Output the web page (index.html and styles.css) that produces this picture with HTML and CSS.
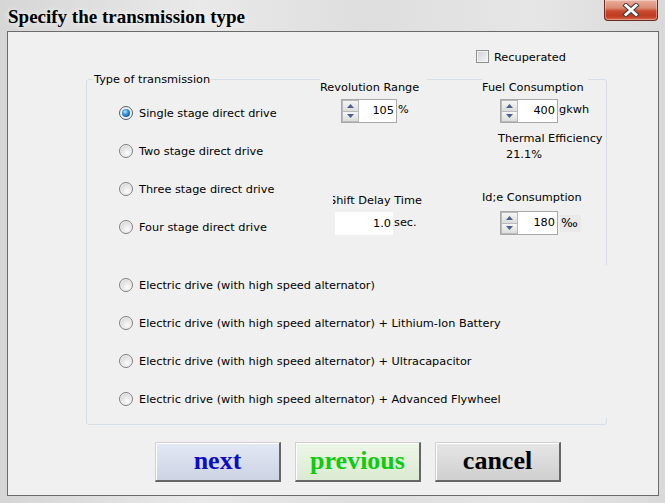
FILE: index.html
```html
<!DOCTYPE html>
<html>
<head>
<meta charset="utf-8">
<link rel="stylesheet" href="styles.css">
</head>
<body>
<div class="window">
  <div class="titlebar">
    <span class="title">Specify the transmission type</span>
    <div class="close">
      <svg width="20" height="14" viewBox="0 0 20 14">
        <path d="M5 2.5 L15 11.5 M15 2.5 L5 11.5" stroke="#3c3c3c" stroke-width="5" stroke-linecap="square"/>
        <path d="M5 2.5 L15 11.5 M15 2.5 L5 11.5" stroke="#ffffff" stroke-width="3" stroke-linecap="square"/>
      </svg>
    </div>
  </div>
  <div class="client">
    <div class="check-row"><span class="checkbox"></span><span class="txt">Recuperated</span></div>
    <div class="group">
      <div class="group-head">
        <span class="legend">Type of transmission</span>
        <span class="head-lbl rev-lbl">Revolution Range</span>
        <span class="head-lbl fuel-lbl">Fuel Consumption</span>
      </div>
      <div class="group-body">
        <div class="radios">
          <div class="radio-row"><span class="radio checked"><span class="dot"></span></span><span class="txt">Single stage direct drive</span></div>
          <div class="radio-row"><span class="radio"></span><span class="txt">Two stage direct drive</span></div>
          <div class="radio-row"><span class="radio"></span><span class="txt">Three stage direct drive</span></div>
          <div class="radio-row"><span class="radio"></span><span class="txt">Four stage direct drive</span></div>
        </div>
        <div class="col col1">
          <div class="ctl-row rev-row">
            <div class="spin">
              <div class="spin-btns">
                <span class="sb"><svg width="7" height="4" viewBox="0 0 7 4"><path d="M0 4 L3.5 0 L7 4 Z" fill="#4d5f8e"/></svg></span>
                <span class="sb"><svg width="7" height="4" viewBox="0 0 7 4"><path d="M0 0 L7 0 L3.5 4 Z" fill="#4d5f8e"/></svg></span>
              </div>
              <span class="spin-val">105</span>
            </div>
            <span class="unit">%</span>
          </div>
          <div class="shift-lbl"><span>Shift Delay Time</span></div>
          <div class="ctl-row shift-row">
            <span class="field">1.0</span>
            <span class="unit">sec.</span>
          </div>
        </div>
        <div class="col col2">
          <div class="ctl-row fuel-row">
            <div class="spin">
              <div class="spin-btns">
                <span class="sb"><svg width="7" height="4" viewBox="0 0 7 4"><path d="M0 4 L3.5 0 L7 4 Z" fill="#4d5f8e"/></svg></span>
                <span class="sb"><svg width="7" height="4" viewBox="0 0 7 4"><path d="M0 0 L7 0 L3.5 4 Z" fill="#4d5f8e"/></svg></span>
              </div>
              <span class="spin-val">400</span>
            </div>
            <span class="unit">gkwh</span>
          </div>
          <div class="thermal">Thermal Efficiency</div>
          <div class="thermal-val">21.1%</div>
          <div class="idle-lbl">Id;e Consumption</div>
          <div class="ctl-row idle-row">
            <div class="spin">
              <div class="spin-btns">
                <span class="sb"><svg width="7" height="4" viewBox="0 0 7 4"><path d="M0 4 L3.5 0 L7 4 Z" fill="#4d5f8e"/></svg></span>
                <span class="sb"><svg width="7" height="4" viewBox="0 0 7 4"><path d="M0 0 L7 0 L3.5 4 Z" fill="#4d5f8e"/></svg></span>
              </div>
              <span class="spin-val">180</span>
            </div>
            <span class="permil">‰</span>
          </div>
        </div>
      </div>
      <div class="radios bottom">
        <div class="radio-row"><span class="radio"></span><span class="txt">Electric drive (with high speed alternator)</span></div>
        <div class="radio-row"><span class="radio"></span><span class="txt">Electric drive (with high speed alternator) + Lithium-Ion Battery</span></div>
        <div class="radio-row"><span class="radio"></span><span class="txt">Electric drive (with high speed alternator) + Ultracapacitor</span></div>
        <div class="radio-row"><span class="radio"></span><span class="txt">Electric drive (with high speed alternator) + Advanced Flywheel</span></div>
      </div>
      <div class="mask"></div>
    </div>
    <div class="buttons">
      <button class="btn btn-next">next</button>
      <button class="btn btn-prev">previous</button>
      <button class="btn btn-cancel">cancel</button>
    </div>
  </div>
</div>
</body>
</html>
```

FILE: styles.css
```css
* { box-sizing: border-box; }
html, body { margin: 0; padding: 0; }
body {
  width: 665px;
  height: 503px;
  overflow: hidden;
  font-family: "DejaVu Sans", sans-serif;
  font-size: 11.3px;
  color: #000;
}
.window {
  width: 665px;
  height: 503px;
  display: flex;
  flex-direction: column;
  background: linear-gradient(to right, #d6d6d6 0%, #e9e9e9 30%, #dedede 55%, #e6e6e6 80%, #d9d9d9 100%);
}
.titlebar {
  height: 31px;
  display: flex;
  justify-content: space-between;
  align-items: flex-start;
}
.title {
  font-family: "Liberation Serif", serif;
  font-weight: bold;
  font-size: 19px;
  line-height: 22px;
  margin: 6px 0 0 8px;
  color: #000;
  text-shadow: 0 0 6px rgba(255,255,255,0.9);
}
.close {
  width: 54px;
  height: 21px;
  margin-right: 7px;
  border: 1px solid #6b2a1f;
  border-top: none;
  border-radius: 0 0 4px 4px;
  background: linear-gradient(#eab0a0 0%, #dc8a73 40%, #c84a30 55%, #c0391f 80%, #d8674a 100%);
  box-shadow: inset 0 0 0 1px rgba(255,255,255,0.35);
  display: flex;
  align-items: center;
  justify-content: center;
}
.client {
  margin-left: 7px;
  width: 652px;
  height: 465px;
  border: 1px solid #6b6b6b;
  background: #f0f0f0;
  display: flex;
  flex-direction: column;
}
.txt { padding-top: 2px; }
.check-row {
  margin: 18px 0 0 468px;
  height: 13px;
  display: flex;
  align-items: center;
  gap: 5px;
  line-height: 14px;
}
.checkbox {
  width: 13px;
  height: 13px;
  border: 1px solid #8e8f8f;
  background: linear-gradient(135deg, #cfd1d4, #f6f6f6);
  box-shadow: inset 0 0 0 1px #f4f4f4;
}
.group {
  position: relative;
  margin: 16px 0 0 78px;
  width: 521px;
  height: 346px;
  border: 1px solid #d5dfe5;
  border-radius: 3px;
}
.group-head {
  display: grid;
  grid-template-columns: 233px 162px 1fr;
  margin-top: -8px;
  height: 22px;
  align-items: start;
}
.legend {
  justify-self: start;
  margin-left: 6px;
  padding: 1px 1px 0;
  line-height: 14px;
  background: #f0f0f0;
}
.head-lbl {
  justify-self: start;
  margin-top: 5px;
  padding-top: 4px;
  line-height: 14px;
  background: #f0f0f0;
  white-space: nowrap;
}
.rev-lbl { width: 107px; }
.fuel-lbl { width: 106px; }
.group-body {
  display: grid;
  grid-template-columns: 246px 149px 1fr;
}
.radios {
  display: flex;
  flex-direction: column;
  padding-left: 33px;
}
.radios.bottom { margin-top: 20px; }
.radio-row {
  height: 38px;
  display: flex;
  align-items: center;
  gap: 6px;
  white-space: nowrap;
  line-height: 14px;
}
.radio {
  width: 14px;
  height: 14px;
  border-radius: 50%;
  border: 1px solid #7e8080;
  background: radial-gradient(circle at 62% 68%, #fbfbfb 0%, #e6e6e6 45%, #c8c8c8 100%);
  box-shadow: inset 0 0 0 1px #f2f2f2;
  display: flex;
  align-items: center;
  justify-content: center;
  flex: none;
  margin-left: -1px;
}
.radio.checked {
  border-color: #4e5f70;
  background: radial-gradient(circle, #ffffff 0%, #e0e0e0 100%);
}
.dot {
  width: 8px;
  height: 8px;
  border-radius: 50%;
  background: radial-gradient(circle at 40% 35%, #c6eaff 0%, #3d9be0 35%, #16579a 75%, #0f3f73 100%);
}
.col { display: flex; flex-direction: column; align-items: flex-start; }
.ctl-row { display: flex; align-items: center; gap: 1px; line-height: 14px; }
.spin {
  width: 56px;
  height: 24px;
  display: flex;
  border: 1px solid #a8a8a8;
  background: #fff;
}
.fuel-row .spin, .idle-row .spin { width: 58px; }
.spin-btns {
  width: 17px;
  display: flex;
  flex-direction: column;
  flex: none;
}
.sb {
  flex: 1;
  display: flex;
  align-items: center;
  justify-content: center;
  border: 1px solid #b9b9b9;
  background: linear-gradient(#f6f6f6, #dcdcdc);
}
.sb + .sb { border-top: none; }
.spin-val {
  flex: 1;
  text-align: right;
  padding-right: 2px;
  line-height: 22px;
}
.unit { line-height: 14px; margin-top: -2px; }
.rev-row { margin: 5px 0 0 8px; }
.shift-lbl {
  margin-top: 70px;
  width: 92px;
  height: 15px;
  line-height: 15px;
  overflow: hidden;
  white-space: nowrap;
}
.shift-lbl span { display: inline-block; margin-left: -4px; }
.shift-row { margin: 4px 0 0 2px; }
.field {
  width: 58px;
  height: 23px;
  background: #fff;
  text-align: right;
  padding-right: 2px;
  line-height: 23px;
}
.fuel-row { margin: 5px 0 0 18px; }
.thermal { margin: 9px 0 0 16px; line-height: 14px; }
.thermal-val { margin: 2px 0 0 24px; line-height: 14px; }
.idle-lbl { margin-top: 29px; line-height: 14px; }
.idle-row { margin: 6px 0 0 18px; }
.permil {
  margin-left: 1px;
  width: 21px;
  height: 17px;
  line-height: 15px;
  background: #e9e9e9;
  padding-left: 1px;
  font-size: 12.5px;
}
.mask {
  position: absolute;
  right: -2px;
  top: 185px;
  bottom: 6px;
  width: 3px;
  background: #f0f0f0;
}
.buttons {
  margin: 17px 0 0 147px;
  display: flex;
  gap: 14px;
}
.btn {
  width: 126px;
  height: 40px;
  padding: 0 0 2px 0;
  font-family: "Liberation Serif", serif;
  font-weight: bold;
  font-size: 26px;
  line-height: 34px;
  border-top: 1px solid #d0d0d0;
  border-left: 1px solid #d0d0d0;
  border-right: 2px solid #666666;
  border-bottom: 2px solid #666666;
  box-shadow: inset 1px 1px 0 #ffffff;
}
.btn-next {
  color: #0c0cc4;
  background: linear-gradient(#e3e8f4, #cdd3e4);
}
.btn-prev {
  color: #0ccc0c;
  background: linear-gradient(#eef6e8, #dbead2);
}
.btn-cancel {
  color: #000;
  background: linear-gradient(#e6e6e6, #cfcfcf);
}
```
